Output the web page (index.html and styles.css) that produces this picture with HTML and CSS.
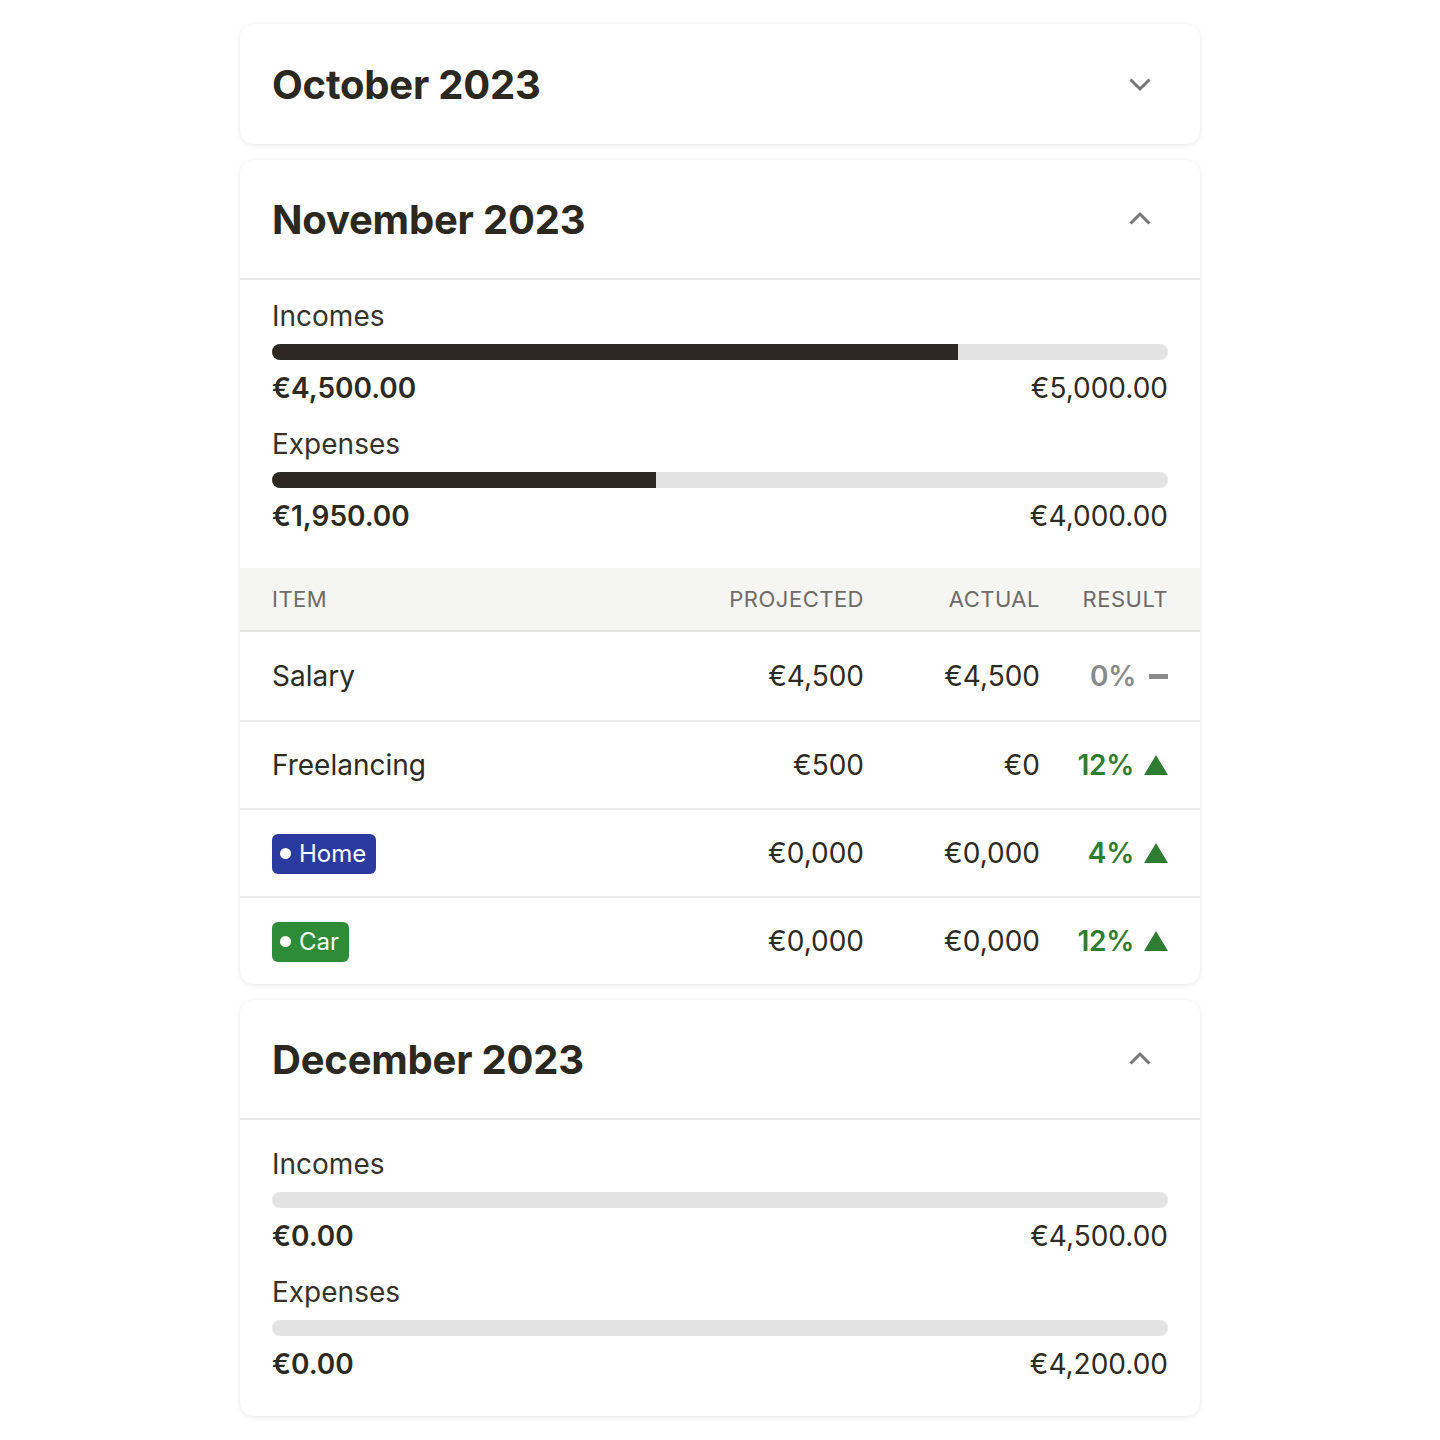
FILE: index.html
```html
<!DOCTYPE html>
<html lang="en">
<head>
    <meta charset="UTF-8">
    <meta name="viewport" content="width=device-width, initial-scale=1.0">
    <title>Budget - Monthly overview</title>
    <link rel="stylesheet" href="styles.css">
</head>
<body>
    <div class="months">

        <!-- October (collapsed) -->
        <section class="month">
            <div class="month-header">
                <h2>October 2023</h2>
                <button class="toggle" aria-label="Expand">
                    <svg width="24" height="24" viewBox="0 0 24 24"><path d="M2.5 7.5l9.5 9.5 9.5-9.5"/></svg>
                </button>
            </div>
        </section>

        <!-- November (expanded) -->
        <section class="month open">
            <div class="month-header">
                <h2>November 2023</h2>
                <button class="toggle" aria-label="Collapse">
                    <svg width="24" height="24" viewBox="0 0 24 24"><path d="M2.5 16.5l9.5-9.5 9.5 9.5"/></svg>
                </button>
            </div>

            <div class="summary">
                <div class="progress">
                    <div class="progress-label">Incomes</div>
                    <div class="bar"><div class="bar-fill" style="width: 76.6%"></div></div>
                    <div class="progress-values">
                        <span class="current">€4,500.00</span>
                        <span class="target">€5,000.00</span>
                    </div>
                </div>
                <div class="progress">
                    <div class="progress-label">Expenses</div>
                    <div class="bar"><div class="bar-fill" style="width: 42.9%"></div></div>
                    <div class="progress-values">
                        <span class="current">€1,950.00</span>
                        <span class="target">€4,000.00</span>
                    </div>
                </div>
            </div>

            <div class="items">
                <div class="items-row items-head">
                    <span>Item</span>
                    <span class="num">Projected</span>
                    <span class="num">Actual</span>
                    <span class="num">Result</span>
                </div>
                <div class="items-row">
                    <span>Salary</span>
                    <span class="num">€4,500</span>
                    <span class="num">€4,500</span>
                    <span class="result neutral">0% <i class="dash"></i></span>
                </div>
                <div class="items-row">
                    <span>Freelancing</span>
                    <span class="num">€500</span>
                    <span class="num">€0</span>
                    <span class="result up">12% <i class="arrow-up"></i></span>
                </div>
                <div class="items-row">
                    <span><span class="tag tag-blue"><i class="dot"></i>Home</span></span>
                    <span class="num">€0,000</span>
                    <span class="num">€0,000</span>
                    <span class="result up">4% <i class="arrow-up"></i></span>
                </div>
                <div class="items-row">
                    <span><span class="tag tag-green"><i class="dot"></i>Car</span></span>
                    <span class="num">€0,000</span>
                    <span class="num">€0,000</span>
                    <span class="result up">12% <i class="arrow-up"></i></span>
                </div>
            </div>
        </section>

        <!-- December (expanded, no items yet) -->
        <section class="month open">
            <div class="month-header">
                <h2>December 2023</h2>
                <button class="toggle" aria-label="Collapse">
                    <svg width="24" height="24" viewBox="0 0 24 24"><path d="M2.5 16.5l9.5-9.5 9.5 9.5"/></svg>
                </button>
            </div>

            <div class="summary summary-empty">
                <div class="progress">
                    <div class="progress-label">Incomes</div>
                    <div class="bar"><div class="bar-fill" style="width: 0%"></div></div>
                    <div class="progress-values">
                        <span class="current">€0.00</span>
                        <span class="target">€4,500.00</span>
                    </div>
                </div>
                <div class="progress">
                    <div class="progress-label">Expenses</div>
                    <div class="bar"><div class="bar-fill" style="width: 0%"></div></div>
                    <div class="progress-values">
                        <span class="current">€0.00</span>
                        <span class="target">€4,200.00</span>
                    </div>
                </div>
            </div>
        </section>

    </div>
</body>
</html>
```

FILE: styles.css
```css
body {
    font-family: Inter, 'Noto Sans', Arial, sans-serif;
    margin: 0;
    padding: 24px 240px;
    color: #2d2a22;
    background-color: #fff;
}

.months {
    display: flex;
    flex-direction: column;
    gap: 16px;
}

.month {
    background-color: #fff;
    border-radius: 14px;
    box-shadow: 0 1px 5px rgba(0, 0, 0, 0.1);
    overflow: hidden;
}

.month-header {
    box-sizing: border-box;
    height: 120px;
    padding: 0 36px 0 32px;
    display: flex;
    align-items: center;
    justify-content: space-between;
}

.month.open .month-header {
    border-bottom: 2px solid #e8e8e8;
}

.month-header h2 {
    margin: 0;
    font-size: 40px;
    font-weight: 700;
    letter-spacing: -0.2px;
    color: #2b281f;
}

.toggle {
    width: 48px;
    height: 48px;
    padding: 0;
    border: none;
    background: none;
    display: flex;
    align-items: center;
    justify-content: center;
    cursor: pointer;
}

.toggle svg path {
    fill: none;
    stroke: #777;
    stroke-width: 3;
    stroke-linecap: butt;
}

/* Summary bars */

.summary {
    padding: 18px 32px 34px;
    display: flex;
    flex-direction: column;
    gap: 20px;
}

.summary-empty {
    padding-top: 26px;
}

.progress-label {
    font-size: 28px;
    line-height: 36px;
    color: #35322b;
}

.bar {
    margin: 10px 0;
    height: 16px;
    border-radius: 8px;
    background-color: #e3e3e3;
    overflow: hidden;
}

.bar-fill {
    height: 100%;
    background-color: #2e2920;
}

.progress-values {
    display: flex;
    justify-content: space-between;
    font-size: 28px;
    line-height: 36px;
}

.progress-values .current {
    font-weight: 600;
}

/* Items table */

.items-row {
    display: grid;
    grid-template-columns: 1fr 200px 176px 128px;
    align-items: center;
    height: 88px;
    box-sizing: border-box;
    padding: 0 32px;
    font-size: 28px;
    border-top: 2px solid #ebebeb;
}

.items-head {
    height: 64px;
    border-top: none;
    border-bottom: 2px solid #e6e6e6;
    background-color: #f5f5f4;
    font-size: 22px;
    letter-spacing: 0.5px;
    text-transform: uppercase;
    color: #6d6b66;
}

.items-head + .items-row {
    border-top: none;
}

.num {
    text-align: right;
}

.result {
    display: flex;
    align-items: center;
    justify-content: flex-end;
    gap: 10px;
    font-weight: 600;
    letter-spacing: -0.3px;
}

.result.neutral {
    color: #8a8a8a;
}

.result.up {
    color: #2e7d32;
}

.dash {
    display: inline-block;
    width: 19px;
    height: 5px;
    margin-left: 3px;
    background-color: #8a8a8a;
}

.arrow-up {
    display: inline-block;
    width: 0;
    height: 0;
    border-left: 12px solid transparent;
    border-right: 12px solid transparent;
    border-bottom: 20px solid #2e7d32;
}

.tag {
    display: inline-flex;
    align-items: center;
    gap: 8px;
    height: 40px;
    padding: 0 10px 0 8px;
    border-radius: 6px;
    color: #fff;
    font-size: 24px;
}

.tag .dot {
    width: 11px;
    height: 11px;
    border-radius: 50%;
    background-color: #fff;
}

.tag-blue {
    background-color: #2b3a9f;
}

.tag-green {
    background-color: #2e8b37;
}
```
